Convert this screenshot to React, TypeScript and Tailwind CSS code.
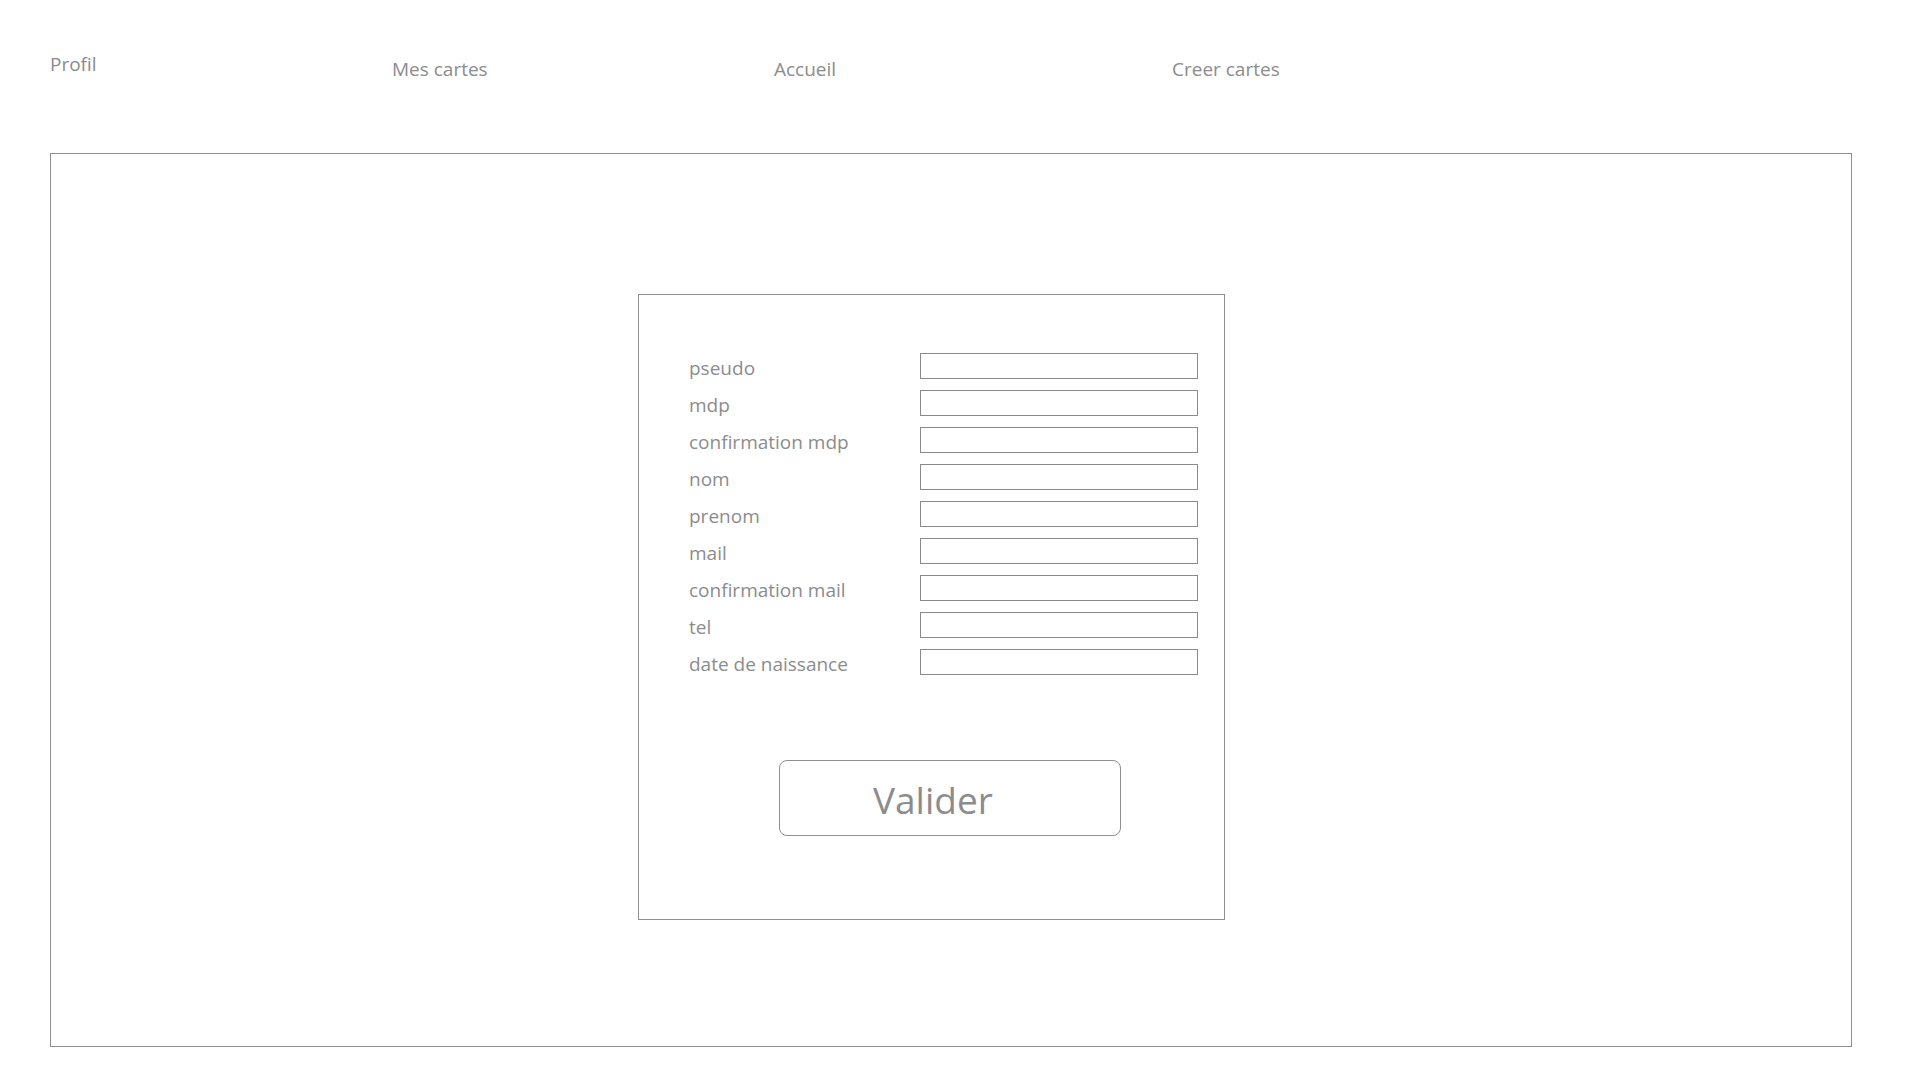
const navItems = [
  { label: 'Profil', width: 'w-[342px]', offset: 'mt-[51px]' },
  { label: 'Mes cartes', width: 'w-[382px]', offset: 'mt-[56px]' },
  { label: 'Accueil', width: 'w-[398px]', offset: 'mt-[56px]' },
  { label: 'Creer cartes', width: 'w-[300px]', offset: 'mt-[56px]' },
]

const fields = [
  'pseudo',
  'mdp',
  'confirmation mdp',
  'nom',
  'prenom',
  'mail',
  'confirmation mail',
  'tel',
  'date de naissance',
]

export default function App() {
  return (
    <div className="h-[1080px] w-[1920px] bg-white font-['Open_Sans',sans-serif] text-[#8c8c8c]">
      <nav className="flex h-[153px] pl-[50px]">
        {navItems.map(item => (
          <div key={item.label} className={`${item.width} ${item.offset} text-[19px] leading-[26px]`}>
            {item.label}
          </div>
        ))}
      </nav>

      <main className="ml-[50px] h-[894px] w-[1802px] border border-[#8f8f8f] pl-[587px] pt-[140px]">
        <form className="h-[626px] w-[587px] border border-[#8f8f8f] pl-[50px] pt-[58px]" onSubmit={e => e.preventDefault()}>
          <div className="flex flex-col gap-[11px]">
            {fields.map(f => (
              <div key={f} className="flex h-[26px] items-start">
                <label className="mt-[2px] w-[231px] text-[19px] leading-[26px]">{f}</label>
                <input className="h-[26px] w-[278px] border border-[#8a8a8a] bg-white outline-none" />
              </div>
            ))}
          </div>
          <button
            type="submit"
            className="ml-[90px] mt-[85px] flex h-[76px] w-[342px] items-center rounded-[8px] border border-[#8f8f8f] pl-[93px] pt-[3px] text-[37px] leading-none text-[#8c8c8c]"
          >
            Valider
          </button>
        </form>
      </main>
    </div>
  )
}
